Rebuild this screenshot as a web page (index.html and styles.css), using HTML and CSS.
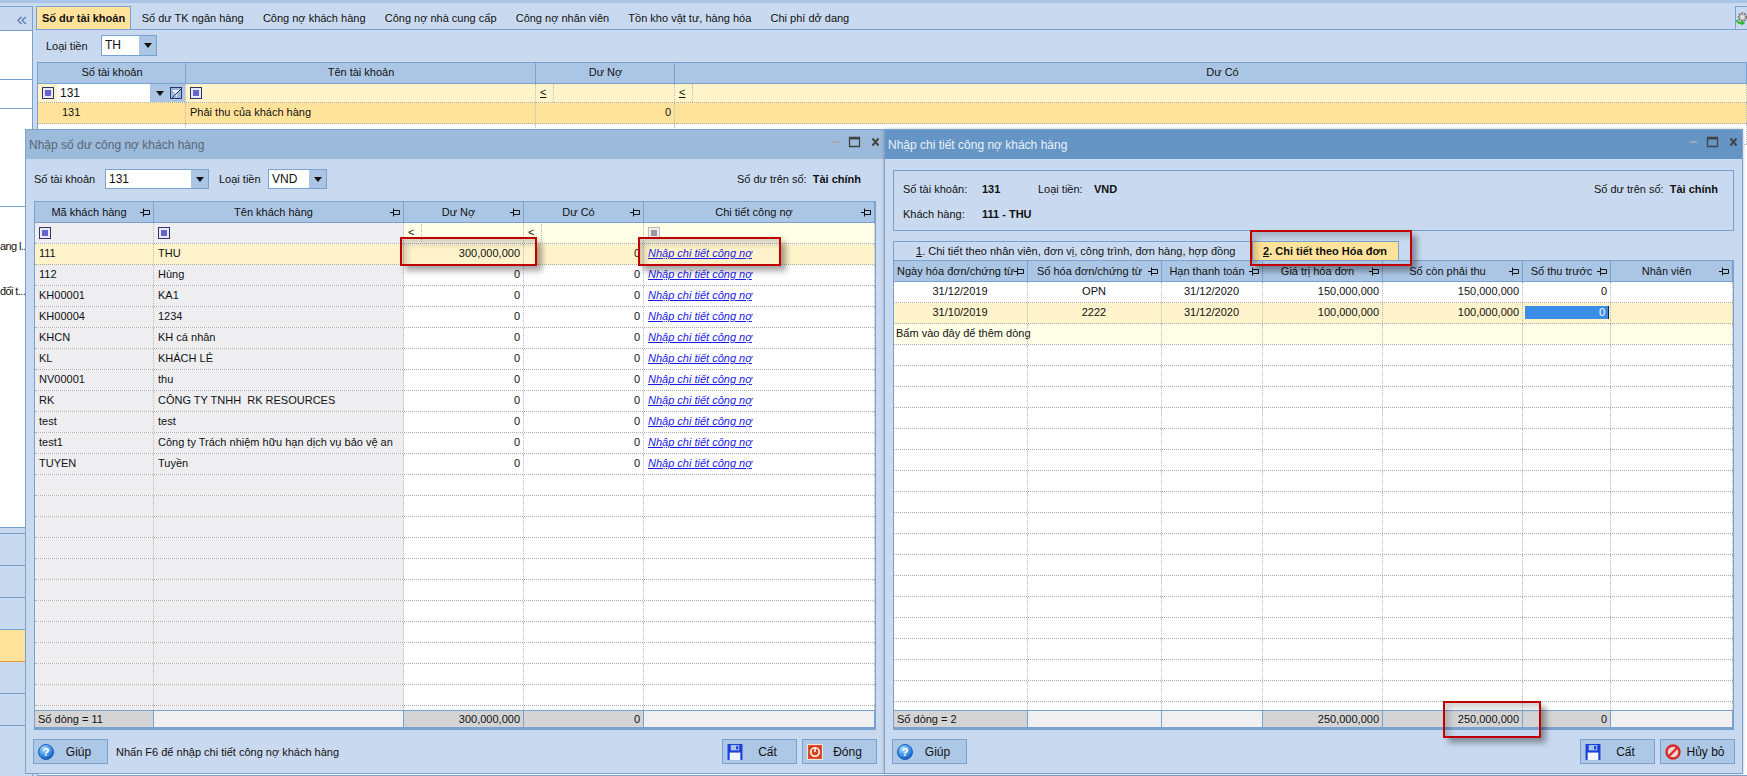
FILE: index.html
```html
<!DOCTYPE html>
<html lang="vi">
<head>
<meta charset="utf-8">
<title>Nhập số dư công nợ khách hàng</title>
<link rel="stylesheet" href="styles.css">
</head>
<body>
<svg class="defs" aria-hidden="true">
  <defs>
    <radialGradient id="helpfill" cx="40%" cy="30%" r="75%"><stop offset="0" stop-color="#bfe2ff"/><stop offset=".55" stop-color="#3f95e8"/><stop offset="1" stop-color="#0d4fb0"/></radialGradient>
    <symbol id="i-filter" viewBox="0 0 12 12"><rect x=".5" y=".5" width="11" height="11" fill="#e9e9f6" stroke="#33336b"/><rect x="3" y="3" width="6" height="6" fill="#6565cc"/></symbol>
    <symbol id="i-filter-g" viewBox="0 0 12 12"><rect x=".5" y=".5" width="11" height="11" fill="#eee" stroke="#bbb"/><rect x="3" y="3" width="6" height="6" fill="#999"/></symbol>
    <symbol id="i-clear" viewBox="0 0 12 12"><rect x=".5" y=".5" width="11" height="11" fill="#9db7dc" stroke="#33336b"/><path d="M2 3h8L7 6.500V10L5 8.500V6.500z" fill="#e8eef8"/><path d="M2 11L11 2" stroke="#33336b"/></symbol>
    <symbol id="i-pin" viewBox="0 0 11 9"><path d="M0 4.500h3M3.500 .5v8M3.500 2.500h6v4h-6z" fill="none" stroke="#111"/></symbol>
    <symbol id="i-help" viewBox="0 0 16 16"><circle cx="8" cy="8" r="7.500" fill="url(#helpfill)" stroke="#1a5fb8"/><text x="8" y="12" text-anchor="middle" font-family="Liberation Sans" font-weight="700" font-size="11" fill="#fff">?</text></symbol>
    <symbol id="i-save" viewBox="0 0 14 15"><path d="M0 0h14v15H0z" fill="#1b3fd8"/><path d="M3 1h8v5H3z" fill="#a8c4ee"/><path d="M8 2h2v3H8z" fill="#1b3fd8"/><path d="M2 8h10v7H2z" fill="#f2f5fb"/></symbol>
    <symbol id="i-stop" viewBox="0 0 15 15"><rect x=".5" y=".5" width="14" height="14" fill="#d8431e" stroke="#f4e6df"/><circle cx="7.500" cy="7.500" r="4" fill="none" stroke="#fff" stroke-width="1.600"/><path d="M7.500 3.500v4" stroke="#fff" stroke-width="1.400"/></symbol>
    <symbol id="i-cancel" viewBox="0 0 16 16"><circle cx="8" cy="8" r="6.500" fill="#f4d4d0" stroke="#d42a2a" stroke-width="2.400"/><path d="M3.500 12.500l9-9" stroke="#d42a2a" stroke-width="2.400"/></symbol>
    <symbol id="i-gear" viewBox="0 0 12 15"><circle cx="7" cy="6" r="4.200" fill="#c8c8c8" stroke="#777" stroke-width="2" stroke-dasharray="2 1"/><circle cx="7" cy="6" r="1.500" fill="#eee"/><path d="M1 9c0 3 3 4 6 3.500" fill="none" stroke="#2eb52e" stroke-width="2.200"/><path d="M6 9.500l4 3-4 2.500z" fill="#2eb52e"/></symbol>
    <symbol id="i-win" viewBox="0 0 47 14"><path d="M0 7h7" stroke="#a6a6ac" stroke-width="2"/><path d="M17.500 2.500h10v9h-10z" fill="none" stroke="#444" stroke-width="1.300"/><path d="M17 2h11v2.500H17z" fill="#444"/><path d="M40.500 3.500l6 7M46.500 3.500l-6 7" stroke="#444" stroke-width="2"/></symbol>
  </defs>
</svg>

<div class="topstrip"></div>
<div class="app">
  <aside class="side">
    <div class="side-head"><span class="chev">«</span></div>
    <div class="side-item s49"></div>
    <div class="side-item s29"></div>
    <div class="side-item s98"></div>
    <div class="side-item s321"><div class="side-txt">ang l..</div><div class="side-txt">đối t...</div></div>
    <div class="side-gap"></div>
    <div class="side-nav"></div><div class="side-nav"></div><div class="side-nav"></div>
    <div class="side-nav on"></div>
    <div class="side-nav"></div><div class="side-nav"></div>
  </aside>
  <main class="main">
    <nav class="tabs">
      <span class="tab active">Số dư tài khoản</span>
      <span class="tab">Số dư TK ngân hàng</span>
      <span class="tab">Công nợ khách hàng</span>
      <span class="tab">Công nợ nhà cung cấp</span>
      <span class="tab">Công nợ nhân viên</span>
      <span class="tab">Tồn kho vật tư, hàng hóa</span>
      <span class="tab">Chi phí dở dang</span>
      <span class="gearbox"><svg class="ic-gear"><use href="#i-gear"/></svg></span>
    </nav>
    <div class="toolbar top">
      <span class="lbl">Loại tiền</span>
      <span class="combo w56"><span class="combo-v">TH</span><span class="combo-b"></span></span>
    </div>
    <div class="grid g-top">
      <div class="row head"><div>Số tài khoản</div><div>Tên tài khoản</div><div>Dư Nợ</div><div class="dc">Dư Có</div></div>
      <div class="row filt">
        <div class="fcell"><svg class="ic"><use href="#i-filter"/></svg><span class="finput">131</span><span class="fbtn"><i class="tri"></i><svg class="ic"><use href="#i-clear"/></svg></span></div>
        <div class="fcell"><svg class="ic"><use href="#i-filter"/></svg></div>
        <div class="fcell"><u class="le">&lt;</u></div>
        <div class="fcell"><u class="le">&lt;</u></div>
      </div>
      <div class="row sel"><div class="ind">131</div><div>Phải thu của khách hàng</div><div class="r">0</div><div></div></div>
      <div class="row"><div></div><div></div><div></div><div></div></div>
    </div>
  </main>
</div>

<section class="win w-left">
  <header class="title inactive"><span>Nhập số dư công nợ khách hàng</span><svg class="ic-win"><use href="#i-win"/></svg></header>
  <div class="win-body">
    <div class="toolbar inner">
      <span class="lbl">Số tài khoản</span>
      <span class="combo w104"><span class="combo-v">131</span><span class="combo-b"></span></span>
      <span class="lbl l2">Loại tiền</span>
      <span class="combo w59"><span class="combo-v">VND</span><span class="combo-b"></span></span>
      <span class="book">Số dư trên số: <b>Tài chính</b></span>
    </div>
    <div class="grid g-left">
      <div class="row head">
        <div class="hp"><span>Mã khách hàng</span><svg class="ic-pin"><use href="#i-pin"/></svg></div>
        <div class="hp"><span>Tên khách hàng</span><svg class="ic-pin"><use href="#i-pin"/></svg></div>
        <div class="hp"><span>Dư Nợ</span><svg class="ic-pin"><use href="#i-pin"/></svg></div>
        <div class="hp"><span>Dư Có</span><svg class="ic-pin"><use href="#i-pin"/></svg></div>
        <div class="hp"><span>Chi tiết công nợ</span><svg class="ic-pin"><use href="#i-pin"/></svg></div>
      </div>
      <div class="rows">
        <div class="row filt2"><div class="fcell"><svg class="ic"><use href="#i-filter"/></svg></div><div class="fcell"><svg class="ic"><use href="#i-filter"/></svg></div><div class="fcell"><u class="le">&lt;</u></div><div class="fcell"><u class="le">&lt;</u></div><div class="fcell"><svg class="ic"><use href="#i-filter-g"/></svg></div></div>
        <div class="row hi"><div>111</div><div>THU</div><div class="r">300,000,000</div><div class="r">0</div><div><a class="lnk">Nhập chi tiết công nợ</a></div></div>
        <div class="row"><div>112</div><div>Hùng</div><div class="r">0</div><div class="r">0</div><div><a class="lnk">Nhập chi tiết công nợ</a></div></div>
        <div class="row"><div>KH00001</div><div>KA1</div><div class="r">0</div><div class="r">0</div><div><a class="lnk">Nhập chi tiết công nợ</a></div></div>
        <div class="row"><div>KH00004</div><div>1234</div><div class="r">0</div><div class="r">0</div><div><a class="lnk">Nhập chi tiết công nợ</a></div></div>
        <div class="row"><div>KHCN</div><div>KH cá nhân</div><div class="r">0</div><div class="r">0</div><div><a class="lnk">Nhập chi tiết công nợ</a></div></div>
        <div class="row"><div>KL</div><div>KHÁCH LẺ</div><div class="r">0</div><div class="r">0</div><div><a class="lnk">Nhập chi tiết công nợ</a></div></div>
        <div class="row"><div>NV00001</div><div>thu</div><div class="r">0</div><div class="r">0</div><div><a class="lnk">Nhập chi tiết công nợ</a></div></div>
        <div class="row"><div>RK</div><div class="pre">CÔNG TY TNHH  RK RESOURCES</div><div class="r">0</div><div class="r">0</div><div><a class="lnk">Nhập chi tiết công nợ</a></div></div>
        <div class="row"><div>test</div><div>test</div><div class="r">0</div><div class="r">0</div><div><a class="lnk">Nhập chi tiết công nợ</a></div></div>
        <div class="row"><div>test1</div><div>Công ty Trách nhiệm hữu hạn dịch vụ bảo vệ an</div><div class="r">0</div><div class="r">0</div><div><a class="lnk">Nhập chi tiết công nợ</a></div></div>
        <div class="row"><div>TUYEN</div><div>Tuyền</div><div class="r">0</div><div class="r">0</div><div><a class="lnk">Nhập chi tiết công nợ</a></div></div>
        <div class="row"><div></div><div></div><div></div><div></div><div></div></div>
        <div class="row"><div></div><div></div><div></div><div></div><div></div></div>
        <div class="row"><div></div><div></div><div></div><div></div><div></div></div>
        <div class="row"><div></div><div></div><div></div><div></div><div></div></div>
        <div class="row"><div></div><div></div><div></div><div></div><div></div></div>
        <div class="row"><div></div><div></div><div></div><div></div><div></div></div>
        <div class="row"><div></div><div></div><div></div><div></div><div></div></div>
        <div class="row"><div></div><div></div><div></div><div></div><div></div></div>
        <div class="row"><div></div><div></div><div></div><div></div><div></div></div>
        <div class="row"><div></div><div></div><div></div><div></div><div></div></div>
        <div class="row"><div></div><div></div><div></div><div></div><div></div></div>
        <div class="row"><div></div><div></div><div></div><div></div><div></div></div>
      </div>
      <div class="row foot"><div class="gr">Số dòng = 11</div><div></div><div class="gr r">300,000,000</div><div class="gr r">0</div><div></div></div>
    </div>
    <footer class="actions">
      <button class="btn"><svg class="ic-btn"><use href="#i-help"/></svg><span>Giúp</span></button>
      <span class="hint">Nhấn F6 để nhập chi tiết công nợ khách hàng</span>
      <button class="btn push"><svg class="ic-btn"><use href="#i-save"/></svg><span>Cất</span></button>
      <button class="btn"><svg class="ic-btn"><use href="#i-stop"/></svg><span>Đóng</span></button>
    </footer>
  </div>
</section>

<section class="win w-right">
  <header class="title active-t"><span>Nhập chi tiết công nợ khách hàng</span><svg class="ic-win"><use href="#i-win"/></svg></header>
  <div class="win-body">
    <div class="info">
      <div class="info-row"><span class="k1">Số tài khoản:</span><b class="v1">131</b><span class="k2">Loại tiền:</span><b>VND</b><span class="book">Số dư trên số: <b>Tài chính</b></span></div>
      <div class="info-row"><span class="k1">Khách hàng:</span><b>111 - THU</b></div>
    </div>
    <div class="subtabs">
      <span class="subtab"><u>1</u>. Chi tiết theo nhân viên, đơn vị, công trình, đơn hàng, hợp đồng</span>
      <span class="subtab cur"><u>2</u>. Chi tiết theo Hóa đơn</span>
    </div>
    <div class="grid g-right">
      <div class="row head">
        <div class="hp"><span>Ngày hóa đơn/chứng từ</span><svg class="ic-pin"><use href="#i-pin"/></svg></div>
        <div class="hp"><span>Số hóa đơn/chứng từ</span><svg class="ic-pin"><use href="#i-pin"/></svg></div>
        <div class="hp"><span>Hạn thanh toán</span><svg class="ic-pin"><use href="#i-pin"/></svg></div>
        <div class="hp"><span>Giá trị hóa đơn</span><svg class="ic-pin"><use href="#i-pin"/></svg></div>
        <div class="hp"><span>Số còn phải thu</span><svg class="ic-pin"><use href="#i-pin"/></svg></div>
        <div class="hp"><span>Số thu trước</span><svg class="ic-pin"><use href="#i-pin"/></svg></div>
        <div class="hp"><span>Nhân viên</span><svg class="ic-pin"><use href="#i-pin"/></svg></div>
      </div>
      <div class="rows">
        <div class="row"><div class="ctr">31/12/2019</div><div class="ctr">OPN</div><div class="ctr">31/12/2020</div><div class="r">150,000,000</div><div class="r">150,000,000</div><div class="r">0</div><div></div></div>
        <div class="row hi"><div class="ctr">31/10/2019</div><div class="ctr">2222</div><div class="ctr">31/12/2020</div><div class="r">100,000,000</div><div class="r">100,000,000</div><div class="edit"><span class="edit-v">0</span></div><div></div></div>
        <div class="row newrow"><div class="over">Bấm vào đây để thêm dòng</div><div></div><div></div><div></div><div></div><div></div><div></div></div>
        <div class="row"><div></div><div></div><div></div><div></div><div></div><div></div><div></div></div>
        <div class="row"><div></div><div></div><div></div><div></div><div></div><div></div><div></div></div>
        <div class="row"><div></div><div></div><div></div><div></div><div></div><div></div><div></div></div>
        <div class="row"><div></div><div></div><div></div><div></div><div></div><div></div><div></div></div>
        <div class="row"><div></div><div></div><div></div><div></div><div></div><div></div><div></div></div>
        <div class="row"><div></div><div></div><div></div><div></div><div></div><div></div><div></div></div>
        <div class="row"><div></div><div></div><div></div><div></div><div></div><div></div><div></div></div>
        <div class="row"><div></div><div></div><div></div><div></div><div></div><div></div><div></div></div>
        <div class="row"><div></div><div></div><div></div><div></div><div></div><div></div><div></div></div>
        <div class="row"><div></div><div></div><div></div><div></div><div></div><div></div><div></div></div>
        <div class="row"><div></div><div></div><div></div><div></div><div></div><div></div><div></div></div>
        <div class="row"><div></div><div></div><div></div><div></div><div></div><div></div><div></div></div>
        <div class="row"><div></div><div></div><div></div><div></div><div></div><div></div><div></div></div>
        <div class="row"><div></div><div></div><div></div><div></div><div></div><div></div><div></div></div>
        <div class="row"><div></div><div></div><div></div><div></div><div></div><div></div><div></div></div>
        <div class="row"><div></div><div></div><div></div><div></div><div></div><div></div><div></div></div>
        <div class="row"><div></div><div></div><div></div><div></div><div></div><div></div><div></div></div>
        <div class="row"><div></div><div></div><div></div><div></div><div></div><div></div><div></div></div>
        <div class="row"><div></div><div></div><div></div><div></div><div></div><div></div><div></div></div>
        <div class="row"><div></div><div></div><div></div><div></div><div></div><div></div><div></div></div>
      </div>
      <div class="row foot"><div class="gr">Số dòng = 2</div><div></div><div></div><div class="gr r">250,000,000</div><div class="gr r">250,000,000</div><div class="gr r">0</div><div></div></div>
    </div>
    <footer class="actions">
      <button class="btn"><svg class="ic-btn"><use href="#i-help"/></svg><span>Giúp</span></button>
      <button class="btn push"><svg class="ic-btn"><use href="#i-save"/></svg><span>Cất</span></button>
      <button class="btn"><svg class="ic-btn"><use href="#i-cancel"/></svg><span>Hủy bỏ</span></button>
    </footer>
  </div>
</section>

<div class="mark m1"></div>
<div class="mark m2"></div>
<div class="mark m3"></div>
<div class="mark m4"></div>
</body>
</html>
```
FILE: styles.css
```css
* { box-sizing: border-box; }
html, body { margin: 0; padding: 0; }
body {
  position: relative;
  width: 1747px;
  height: 776px;
  overflow: hidden;
  background: #c9daf0;
  font-family: "Liberation Sans", Arial, sans-serif;
  font-size: 11px;
  color: #111;
}
.defs { display: block; width: 0; height: 0; overflow: hidden; }
.topstrip { height: 3px; background: #a9c4e4; }
.app { display: flex; height: 773px; padding-top: 3px; }

/* sidebar */
.side { width: 33px; flex: none; display: flex; flex-direction: column; border-right: 1px solid #7ba1cf; border-top: 1px solid #7ba1cf; }
.side-head { height: 24px; border-bottom: 1px solid #7ba1cf; display: flex; justify-content: flex-end; align-items: center; padding-right: 5px; }
.chev { color: #5a80b8; font-size: 19px; line-height: 18px; }
.side-item { background: #fff; border-bottom: 1px solid #7ba1cf; }
.s49 { height: 49px; }
.s29 { height: 29px; }
.s98 { height: 98px; }
.s321 { height: 321px; padding-top: 32px; border-bottom: 1px solid #7ba1cf; }
.side-txt { height: 14px; line-height: 14px; margin-bottom: 31px; white-space: nowrap; text-align: right; padding-right: 7px; letter-spacing: -.6px; }
.side-gap { height: 6px; border-bottom: 1px solid #7ba1cf; }
.side-nav { height: 32px; border-bottom: 1px solid #7ba1cf; }
.side-nav.on { background: #ffe39b; border-bottom-color: #f09a3c; }

/* main */
.main { flex: 1; min-width: 0; padding-left: 4px; display: flex; flex-direction: column; border-left: 0; }
.tabs { height: 24px; display: flex; align-items: stretch; border-bottom: 1px solid #7ba1cf; margin-left: -1px; }
.tab { display: flex; align-items: center; padding: 0 9.600px; white-space: nowrap; }
.tab.active { background: #ffe39b; font-weight: 700; border: 1px solid #7ba1cf; border-bottom: 0; padding: 0 5px; margin-right: 1px; }
.gearbox { margin-left: auto; width: 12px; border-left: 1px solid #7ba1cf; border-top: 1px solid #7ba1cf; display: flex; align-items: center; }
.ic-gear { width: 12px; height: 15px; }

.toolbar { display: flex; align-items: center; }
.toolbar.top { height: 21px; margin: 5px 0 6px; padding-left: 9px; }
.toolbar.top .lbl { width: 55px; }
.toolbar.inner { height: 20px; margin: 0 1px 12px; }
.toolbar.inner .lbl { width: 71px; }
.toolbar.inner .lbl.l2 { width: 49px; margin-left: 10px; }
.combo { display: flex; height: 100%; background: #fff; border: 1px solid #7ba1cf; }
.w56 { width: 56px; }
.w104 { width: 104px; }
.w59 { width: 59px; }
.combo-v { flex: 1; padding-left: 3px; line-height: 18px; font-size: 12px; }
.combo-b { width: 17px; background: #abc6e5; display: flex; align-items: center; justify-content: center; }
.combo-b::after, .tri { content: ""; display: block; width: 0; height: 0; border: 4px solid transparent; border-top: 5px solid #111; border-bottom: 0; }
.book { margin-left: auto; padding-right: 15px; }
.book b { margin-left: 3px; }

/* grids */
.grid { border: 1px solid #7ba1cf; background: #fff; display: flex; flex-direction: column; }
.g-top { flex: 1; border-right: 0; margin-right: 0; --cols: 148px 350px 139px 1fr; }
.g-left { flex: 1; min-height: 0; margin: 0 1px; --cols: 119px 250px 120px 120px 1fr; }
.g-right { flex: 1; min-height: 0; margin: 0 1px; --cols: 134px 134px 101px 120px 140px 88px 1fr; }
.rows { flex: 1; min-height: 0; overflow: hidden; }
.row { display: grid; grid-template-columns: var(--cols); height: 21px; border-bottom: 1px dotted #aaa; }
.row > div { border-right: 1px dotted #bbb; padding: 0 3px 0 4px; line-height: 19px; white-space: nowrap; overflow: hidden; min-width: 0; }
.pre { white-space: pre !important; }
.g-right .row > div { padding-left: 2px; }
.row .r { text-align: right; }
.row .ctr { text-align: center; }
.g-top .row .ind { padding-left: 24px; }
.row.head { height: 21px; background: #abc6e5; border-bottom: 1px solid #7ba1cf; }
.row.head > div { border-right: 1px solid #7ba1cf; text-align: center; }
.g-top .row.head > .dc { padding-left: 27px; }
.hp { display: flex; align-items: center; padding: 0 2px 0 3px !important; }
.hp span { flex: 1; text-align: center; }
.ic-pin { width: 11px; height: 9px; flex: none; }
.g-top .row.filt { height: 19px; background: #fff3c9; }
.g-top .row.filt .fcell { line-height: 18px; }
.row.sel { background: #ffe39b; height: 21px; }
.fcell { display: flex; align-items: center; padding: 0 0 0 4px !important; }
.ic { width: 12px; height: 12px; flex: none; }
.finput { flex: 1; background: #fff; height: 18px; line-height: 18px; padding-left: 3px; margin-left: 3px; font-size: 12px; }
.fbtn { width: 35px; height: 18px; background: #abc6e5; display: flex; align-items: center; justify-content: flex-end; gap: 6px; padding-right: 3px; }
.le { width: 14px; text-decoration: underline; display: block; border-right: 1px dotted #bbb; height: 18px; line-height: 17px; }
.filt2 > div:nth-child(n+3) { background: #ffffe8; }
.g-left .row:not(.hi):not(.head):not(.foot) > div:nth-child(-n+2) { background: #eeeef1; }
.g-left .row.filt2 > div:nth-child(-n+2) { background: #eeeef1; }
.row.hi { background: #fff3cb; }
.row.newrow { background: #ffffe8; }
.row.newrow > div.over { overflow: visible; }
.lnk { color: #1a1ae6; font-style: italic; text-decoration: underline; }
.row .edit { padding: 3px 1px 2px 1px; }
.edit-v { display: block; height: 13px; line-height: 12px; background: #3a8ee8; color: #fff; text-align: right; padding-right: 3px; border-right: 1px solid #123; }
.row.foot { height: 19px; background: #f0f0f0; border-top: 1px solid #7ba1cf; border-bottom: 2px solid #7ba1cf; }
.row.foot > div { border-right: 1px solid #7ba1cf; line-height: 16px; padding-left: 3px; }
.row.foot .gr { background: #d4d4d4; }

/* windows */
.win { position: absolute; top: 129px; height: 645px; border: 1px solid #7ba1cf; background: #c9daf0; display: flex; flex-direction: column; }
.w-left { left: 25px; width: 860px; }
.w-right { left: 884px; width: 859px; box-shadow: 0 0 3px rgba(90,90,90,.4); }
.title { height: 29px; flex: none; display: flex; align-items: center; justify-content: space-between; padding: 0 5px 0 3px; font-size: 12px; }
.title.inactive { background: #9cbad9; color: #56677a; }
.title.active-t { background: #6595c5; color: #e8f1fb; }
.ic-win { width: 47px; height: 14px; margin-top: -5px; }
.win-body { flex: 1; min-height: 0; display: flex; flex-direction: column; padding: 10px 7px 9px 7px; }
.actions { height: 25px; margin-top: 9px; display: flex; align-items: stretch; flex: none; }
.btn { width: 75px; background: #adc8e6; border: 1px solid #7ba1cf; display: flex; align-items: center; padding: 0 4px; font: inherit; color: #111; }
.btn + .btn { margin-left: 5px; }
.btn span { flex: 1; text-align: center; font-size: 12px; }
.btn.push { margin-left: auto; }
.ic-btn { width: 16px; height: 16px; flex: none; }
.hint { margin-left: 8px; line-height: 27px; }

/* right window header */
.info { height: 61px; flex: none; margin: 1px 1px 10px; border: 1px solid #7ba1cf; padding: 10px 15px 0 9px; }
.info-row { display: flex; height: 25px; line-height: 14px; padding-top: 1px; }
.k1 { width: 79px; }
.v1 { width: 56px; }
.k2 { width: 56px; }
.info .book { padding-right: 0; }
.subtabs { height: 19px; flex: none; display: flex; margin: 0 1px; }
.subtab { display: flex; align-items: center; border: 1px solid #7ba1cf; border-bottom: 0; width: 360px; padding-left: 22px; white-space: pre; background: #c9daf0; }
.subtab.cur { width: 147px; background: #ffe39b; font-weight: 700; padding-left: 10px; margin-left: -1px; }

/* annotation boxes */
.mark { position: absolute; border: 2px solid #c00000; box-shadow: 5px 5px 6px rgba(0,0,0,.35), inset 5px 5px 6px rgba(0,0,0,.18); }
.m1 { left: 400px; top: 237px; width: 137px; height: 29px; }
.m2 { left: 638px; top: 237px; width: 143px; height: 29px; }
.m3 { left: 1250px; top: 230px; width: 162px; height: 36px; }
.m4 { left: 1443px; top: 701px; width: 98px; height: 37px; }
```
